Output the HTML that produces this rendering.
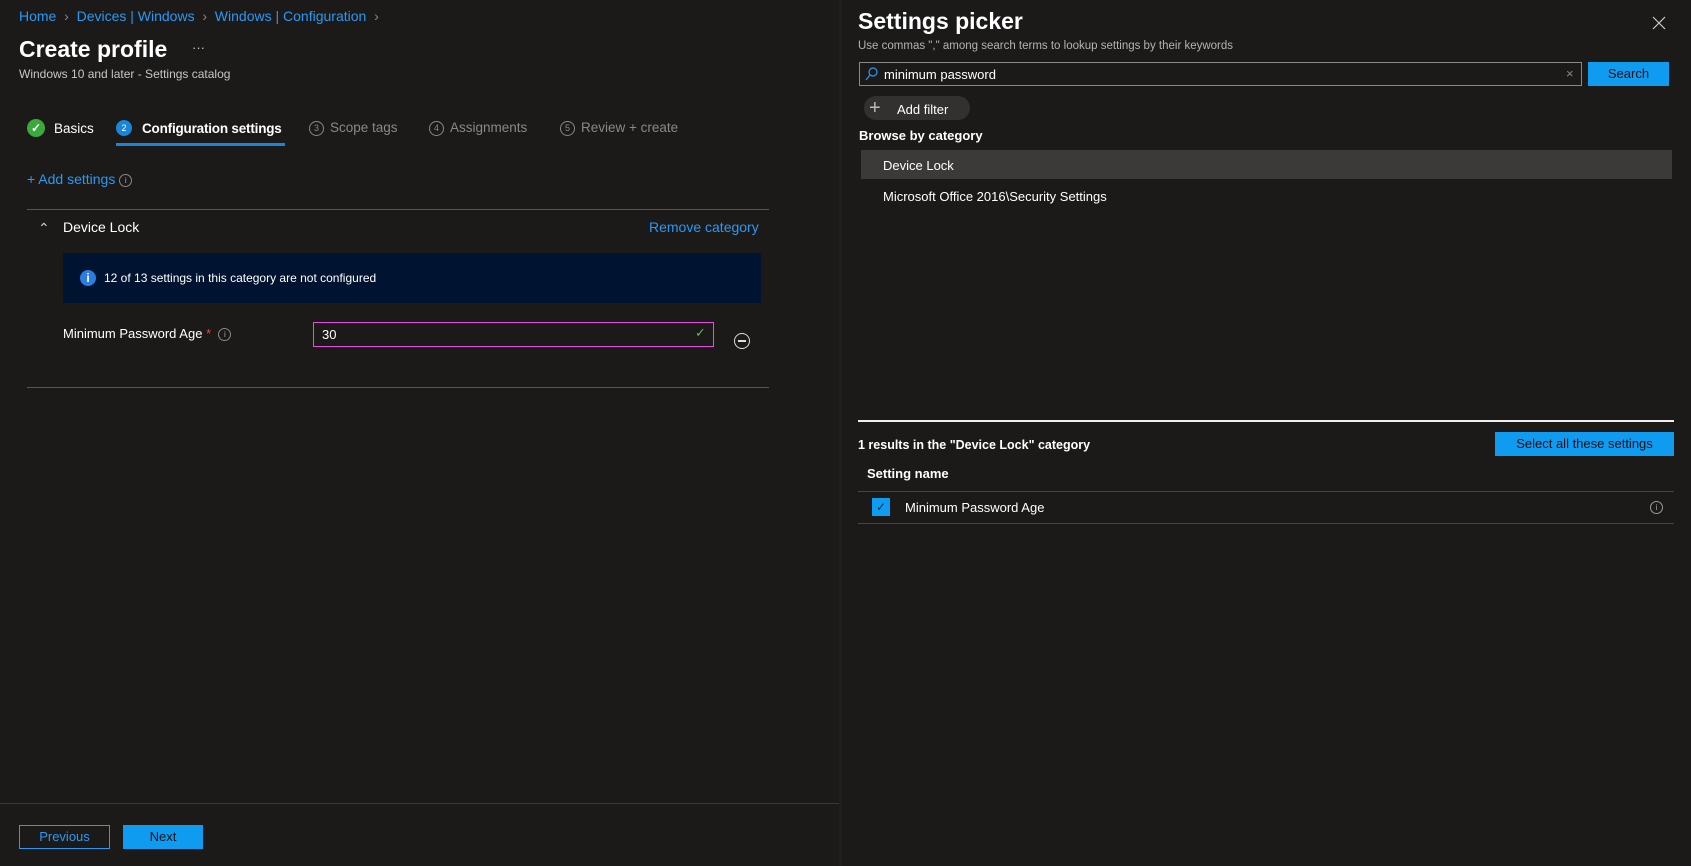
<!DOCTYPE html>
<html><head><meta charset="utf-8"><style>
*{margin:0;padding:0;box-sizing:border-box}
body{width:1691px;height:866px;background:#1b1a19;font-family:"Liberation Sans",sans-serif;color:#fff;font-size:13px;position:relative;overflow:hidden}
.a{position:absolute;white-space:nowrap}
.blue{color:#2899f5}
.gray{color:#8a8886}
.circ{display:inline-block;width:15px;height:15px;border-radius:50%;border:1px solid #8a8886;font-size:9px;text-align:center;line-height:13px;vertical-align:middle;margin-right:6px}
</style></head><body>
<div class="a" style="left:0;top:0;width:839px;height:866px;background:#1b1a19"></div>
<div class="a" style="left:839px;top:0;width:3px;height:866px;background:#201f1e"></div>
<div class="a" style="left:842px;top:0;width:849px;height:866px;background:#1b1a19"></div>

<div class="a blue" style="left:19px;top:8px;font-size:14px">Home <span class="gray">&nbsp;›&nbsp;</span> Devices | Windows <span class="gray">&nbsp;›&nbsp;</span> Windows | Configuration <span class="gray">&nbsp;›</span></div>
<div class="a" style="left:19px;top:36px;font-size:23px;font-weight:bold">Create profile</div>
<div class="a" style="left:192px;top:40px;color:#ccc">···</div>
<div class="a" style="left:19px;top:67px;font-size:12px;color:#c8c6c4">Windows 10 and later - Settings catalog</div>

<div class="a" style="left:27px;top:119px;width:18px;height:18px;border-radius:50%;background:#3ba93b;text-align:center;line-height:18px;font-size:12px;font-weight:bold">✓</div>
<div class="a" style="left:54px;top:121px;font-size:13.5px">Basics</div>
<div class="a" style="left:116px;top:120px;width:16px;height:16px;border-radius:50%;background:#1a86d9;text-align:center;line-height:16px;font-size:9px">2</div>
<div class="a" style="left:142px;top:121px;font-size:13.5px;font-weight:bold;letter-spacing:-0.2px">Configuration settings</div>
<div class="a" style="left:116px;top:143px;width:169px;height:3px;background:#1a86d9"></div>
<div class="a gray" style="left:309px;top:120px;font-size:13.5px"><span class="circ">3</span>Scope tags</div>
<div class="a gray" style="left:429px;top:120px;font-size:13.5px"><span class="circ">4</span>Assignments</div>
<div class="a gray" style="left:560px;top:120px;font-size:13.5px"><span class="circ">5</span>Review + create</div>

<div class="a blue" style="left:27px;top:171px;font-size:14px">+ Add settings <span class="circ" style="width:13px;height:13px;line-height:11px;font-size:8px;color:#aaa">i</span></div>
<div class="a" style="left:27px;top:209px;width:742px;height:1px;background:#555"></div>
<div class="a" style="left:38px;top:220px;font-size:14px;color:#ccc">⌃</div>
<div class="a" style="left:63px;top:219px;font-size:14px">Device Lock</div>
<div class="a blue" style="left:649px;top:219px;font-size:14px">Remove category</div>
<div class="a" style="left:63px;top:253px;width:698px;height:50px;background:#001330"></div>
<div class="a" style="left:80px;top:270px;width:16px;height:16px;border-radius:50%;background:#2b7de0;text-align:center;line-height:16px;font-size:12px;font-weight:bold">i</div>
<div class="a" style="left:104px;top:271px;font-size:12px">12 of 13 settings in this category are not configured</div>
<div class="a" style="left:63px;top:326px;font-size:13px">Minimum Password Age <span style="color:#e44">*</span> &nbsp;<span class="circ" style="width:13px;height:13px;line-height:11px;font-size:8px;color:#aaa">i</span></div>
<div class="a" style="left:313px;top:322px;width:401px;height:25px;border:1px solid #e04fe0"></div>
<div class="a" style="left:322px;top:327px;font-size:13px">30</div>
<div class="a" style="left:695px;top:325px;color:#5cb85c;font-size:13px">✓</div>
<div class="a" style="left:734px;top:333px;width:16px;height:16px;border-radius:50%;border:1.5px solid #ddd"></div>
<div class="a" style="left:738px;top:340px;width:8px;height:1.5px;background:#ddd"></div>
<div class="a" style="left:27px;top:387px;width:742px;height:1px;background:#555"></div>

<div class="a" style="left:0;top:803px;width:839px;height:1px;background:#3a3938"></div>
<div class="a blue" style="left:19px;top:825px;width:91px;height:24px;border:1px solid #2899f5;text-align:center;line-height:22px;font-size:13px">Previous</div>
<div class="a" style="left:123px;top:825px;width:80px;height:24px;background:#0f9bf0;color:#111;text-align:center;line-height:24px;font-size:13px">Next</div>

<div class="a" style="left:858px;top:8px;font-size:23px;font-weight:bold">Settings picker</div>
<svg class="a" style="left:1652px;top:16px" width="14" height="14"><path d="M1 1L13 13M13 1L1 13" stroke="#ccc" stroke-width="1.2"/></svg>
<div class="a" style="left:858px;top:40px;font-size:11.5px;color:#b5b3b1">Use commas "," among search terms to lookup settings by their keywords</div>
<div class="a" style="left:859px;top:62px;width:723px;height:24px;border:1px solid #8a8886"></div>
<svg class="a" style="left:865px;top:67px" width="13" height="14"><circle cx="8" cy="5" r="4" fill="none" stroke="#2899f5" stroke-width="1.2"/><path d="M5 8L1 13" stroke="#2899f5" stroke-width="1.2"/></svg>
<div class="a" style="left:884px;top:67px;font-size:13px">minimum password</div>
<div class="a" style="left:1566px;top:66px;color:#888;font-size:13px">×</div>
<div class="a" style="left:1588px;top:62px;width:81px;height:24px;background:#0f9bf0;color:#111;text-align:center;line-height:24px;font-size:13px">Search</div>
<div class="a" style="left:864px;top:96px;width:106px;height:24px;border-radius:12px;background:#323130"></div>
<div class="a" style="left:869px;top:96px;font-size:20px;color:#bbb;line-height:24px">+</div>
<div class="a" style="left:897px;top:102px;font-size:13px">Add filter</div>
<div class="a" style="left:859px;top:128px;font-size:13px;font-weight:bold">Browse by category</div>
<div class="a" style="left:861px;top:150px;width:811px;height:29px;background:#3b3a39"></div>
<div class="a" style="left:883px;top:158px;font-size:13px">Device Lock</div>
<div class="a" style="left:883px;top:189px;font-size:13px">Microsoft Office 2016\Security Settings</div>
<div class="a" style="left:858px;top:420px;width:816px;height:1.5px;background:#eee"></div>
<div class="a" style="left:858px;top:438px;font-size:12.5px;font-weight:bold">1 results in the "Device Lock" category</div>
<div class="a" style="left:1495px;top:432px;width:179px;height:24px;background:#0f9bf0;color:#111;text-align:center;line-height:24px;font-size:13px">Select all these settings</div>
<div class="a" style="left:867px;top:466px;font-size:13px;font-weight:bold">Setting name</div>
<div class="a" style="left:858px;top:491px;width:816px;height:1px;background:#444"></div>
<div class="a" style="left:872px;top:498px;width:18px;height:18px;background:#0f9bf0;color:#0a3050;text-align:center;line-height:18px;font-size:12px">✓</div>
<div class="a" style="left:905px;top:500px;font-size:13px">Minimum Password Age</div>
<div class="a" style="left:1650px;top:501px;width:13px;height:13px;border-radius:50%;border:1px solid #999;font-size:8px;line-height:11px;text-align:center;color:#aaa">i</div>
<div class="a" style="left:858px;top:523px;width:816px;height:1px;background:#444"></div>
</body></html>
